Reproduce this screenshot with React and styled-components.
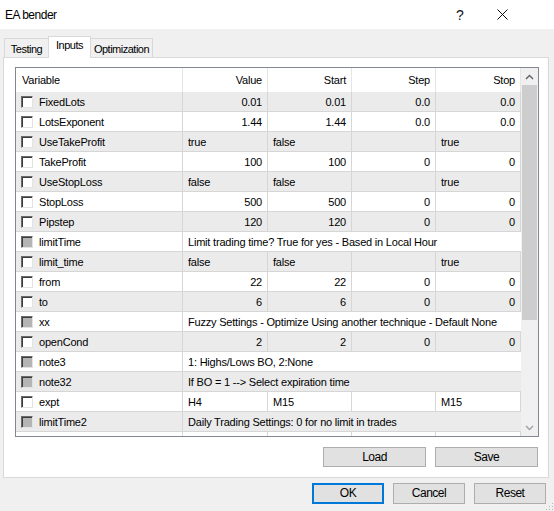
import React from "react";
import styled, { createGlobalStyle } from "styled-components";

const GlobalStyle = createGlobalStyle`
  html, body { margin: 0; padding: 0; background: #f0f0f0; }
  * { box-sizing: border-box; }
`;

const Window = styled.div`
  width: 554px;
  height: 511px;
  background: #f0f0f0;
  display: flex;
  flex-direction: column;
  position: relative;
  font-family: "Liberation Sans", Arial, sans-serif;
  color: #000;
  overflow: hidden;
`;

const TitleBar = styled.div`
  height: 29px;
  background: #fff;
  display: flex;
  align-items: center;
  padding-left: 5px;
  padding-right: 31px;
`;

const Title = styled.div`
  flex: 1;
  font-size: 12px;
  letter-spacing: -0.5px;
`;

const TitleButton = styled.div`
  width: 42px;
  height: 29px;
  display: flex;
  align-items: center;
  justify-content: center;
  font-size: 14px;
  color: #111;
`;

const TabStrip = styled.div`
  display: flex;
  align-items: flex-end;
  margin-top: 7px;
  padding-left: 4px;
  height: 21px;
  position: relative;
  z-index: 1;
`;

const Tab = styled.div`
  width: ${(p) => p.$w}px;
  height: ${(p) => (p.$active ? 22 : 19)}px;
  margin-left: ${(p) => (p.$first ? 0 : -1)}px;
  margin-bottom: ${(p) => (p.$active ? -1 : 0)}px;
  border: 1px solid #d9d9d9;
  border-bottom: none;
  background: ${(p) => (p.$active ? "#fff" : "#f0f0f0")};
  font-size: 11px;
  letter-spacing: -0.5px;
  display: flex;
  justify-content: center;
  padding-top: ${(p) => (p.$active ? 2 : 4)}px;
`;

const Panel = styled.div`
  margin-left: 3px;
  width: 546px;
  height: 421px;
  background: #fff;
  border: 1px solid #d9d9d9;
  padding: 9px 9px 10px 11px;
  display: flex;
  flex-direction: column;
`;

const ListView = styled.div`
  width: 524px;
  height: 370px;
  border: 1px solid #828790;
  display: flex;
  background: #fff;
`;

const TableArea = styled.div`
  width: 505px;
  display: flex;
  flex-direction: column;
  font-size: 11px;
  letter-spacing: -0.2px;
`;

const COLS = "167px 85px 84px 84px 85px";

const HeaderRow = styled.div`
  display: grid;
  grid-template-columns: ${COLS};
  height: 24px;
`;

const HeaderCell = styled.div`
  border-right: 1px solid #e5e5e5;
  display: flex;
  align-items: center;
  justify-content: ${(p) => (p.$left ? "flex-start" : "flex-end")};
  padding: 0 5px 1px 6px;
`;

const BodyArea = styled.div`
  height: 344px;
  overflow: hidden;
`;

const Row = styled.div`
  display: grid;
  grid-template-columns: ${COLS};
  height: 20px;
  background: ${(p) => (p.$alt ? "#ebebeb" : "#fff")};
  border-bottom: 1px solid #d6d6d6;
`;

const NameCell = styled.div`
  display: flex;
  align-items: center;
  gap: 6px;
  padding-left: 5px;
  border-right: 1px solid #d6d6d6;
`;

const CheckBox = styled.span`
  width: 12px;
  height: 12px;
  flex: none;
  background: ${(p) => (p.$dim ? "#b5b5b5" : "#fff")};
  border: 1px solid;
  border-color: #6b6b6b #e3e3e3 #e3e3e3 #6b6b6b;
  box-shadow: inset 1px 1px 0 #3c3c3c;
`;

const Cell = styled.div`
  display: flex;
  align-items: center;
  justify-content: ${(p) => (p.$left ? "flex-start" : "flex-end")};
  padding: 0 5px 0 5px;
  border-right: 1px solid #d6d6d6;
  white-space: nowrap;
`;

const NoteCell = styled.div`
  grid-column: 2 / span 4;
  display: flex;
  align-items: center;
  padding-left: 5px;
  white-space: nowrap;
`;

const ScrollBar = styled.div`
  width: 17px;
  background: #f0f0f0;
  display: flex;
  flex-direction: column;
`;

const ScrollArrow = styled.div`
  height: 17px;
  display: flex;
  align-items: center;
  justify-content: center;
`;

const ScrollTrack = styled.div`
  flex: 1;
  padding: 0 1px;
`;

const ScrollThumb = styled.div`
  height: 235px;
  background: #cdcdcd;
`;

const PanelButtons = styled.div`
  display: flex;
  justify-content: flex-end;
  gap: 9px;
  margin-top: 10px;
  padding-right: 1px;
`;

const Button = styled.div`
  width: ${(p) => p.$w}px;
  height: ${(p) => p.$h}px;
  background: #e1e1e1;
  border: ${(p) => (p.$default ? "2px solid #0078d7" : "1px solid #adadad")};
  display: flex;
  align-items: center;
  justify-content: center;
  font-size: 12px;
  letter-spacing: -0.5px;
  padding-bottom: 1px;
`;

const DialogButtons = styled.div`
  display: flex;
  justify-content: flex-end;
  gap: 9px;
  margin-top: 5px;
  padding-right: 8px;
`;

const Grip = styled.svg`
  position: absolute;
  right: 0;
  bottom: 0;
`;

const rows = [
  { name: "FixedLots", vals: ["0.01", "0.01", "0.0", "0.0"] },
  { name: "LotsExponent", vals: ["1.44", "1.44", "0.0", "0.0"] },
  { name: "UseTakeProfit", vals: ["true", "false", "", "true"], left: true },
  { name: "TakeProfit", vals: ["100", "100", "0", "0"] },
  { name: "UseStopLoss", vals: ["false", "false", "", "true"], left: true },
  { name: "StopLoss", vals: ["500", "500", "0", "0"] },
  { name: "Pipstep", vals: ["120", "120", "0", "0"] },
  { name: "limitTime", note: "Limit trading time? True for yes - Based in Local Hour" },
  { name: "limit_time", vals: ["false", "false", "", "true"], left: true },
  { name: "from", vals: ["22", "22", "0", "0"] },
  { name: "to", vals: ["6", "6", "0", "0"] },
  { name: "xx", note: "Fuzzy Settings - Optimize Using another technique - Default None" },
  { name: "openCond", vals: ["2", "2", "0", "0"] },
  { name: "note3", note: "1: Highs/Lows BO, 2:None" },
  { name: "note32", note: "If BO = 1 --> Select expiration time" },
  { name: "expt", vals: ["H4", "M15", "", "M15"], left: true },
  { name: "limitTime2", note: "Daily Trading Settings: 0 for no limit in trades" },
];

const Chevron = ({ up }) => (
  <svg width="9" height="6" viewBox="0 0 9 6">
    <path
      d={up ? "M1 5 L4.5 1.5 L8 5" : "M1 1 L4.5 4.5 L8 1"}
      fill="none"
      stroke={up ? "#606060" : "#a0a0a0"}
      strokeWidth="1.4"
    />
  </svg>
);

export default function App() {
  return (
    <>
      <GlobalStyle />
      <Window>
        <TitleBar>
          <Title>EA bender</Title>
          <TitleButton>?</TitleButton>
          <TitleButton>
            <svg width="11" height="11" viewBox="0 0 11 11">
              <path d="M0.5 0.5 L10.5 10.5 M10.5 0.5 L0.5 10.5" stroke="#111" strokeWidth="1" />
            </svg>
          </TitleButton>
        </TitleBar>
        <TabStrip>
          <Tab $w={45} $first>Testing</Tab>
          <Tab $w={43} $active>Inputs</Tab>
          <Tab $w={63}>Optimization</Tab>
        </TabStrip>
        <Panel>
          <ListView>
            <TableArea>
              <HeaderRow>
                <HeaderCell $left>Variable</HeaderCell>
                <HeaderCell>Value</HeaderCell>
                <HeaderCell>Start</HeaderCell>
                <HeaderCell>Step</HeaderCell>
                <HeaderCell>Stop</HeaderCell>
              </HeaderRow>
              <BodyArea>
                {rows.map((r, i) => (
                  <Row key={r.name} $alt={i % 2 === 0}>
                    <NameCell>
                      <CheckBox $dim={!!r.note} />
                      {r.name}
                    </NameCell>
                    {r.note ? (
                      <NoteCell>{r.note}</NoteCell>
                    ) : (
                      r.vals.map((v, j) => (
                        <Cell key={j} $left={r.left}>
                          {v}
                        </Cell>
                      ))
                    )}
                  </Row>
                ))}
                <Row>
                  <NameCell />
                  <Cell />
                  <Cell />
                  <Cell />
                  <Cell />
                </Row>
              </BodyArea>
            </TableArea>
            <ScrollBar>
              <ScrollArrow>
                <Chevron up />
              </ScrollArrow>
              <ScrollTrack>
                <ScrollThumb />
              </ScrollTrack>
              <ScrollArrow>
                <Chevron />
              </ScrollArrow>
            </ScrollBar>
          </ListView>
          <PanelButtons>
            <Button $w={103} $h={20}>Load</Button>
            <Button $w={103} $h={20}>Save</Button>
          </PanelButtons>
        </Panel>
        <DialogButtons>
          <Button $w={72} $h={21} $default>OK</Button>
          <Button $w={72} $h={21}>Cancel</Button>
          <Button $w={72} $h={21}>Reset</Button>
        </DialogButtons>
        <Grip width="10" height="10" viewBox="0 0 10 10">
          {[
            [8, 2], [8, 5], [5, 5], [8, 8], [5, 8], [2, 8],
          ].map(([x, y], k) => (
            <rect key={k} x={x} y={y} width="1" height="1" fill="#b8b8b8" />
          ))}
        </Grip>
      </Window>
    </>
  );
}
